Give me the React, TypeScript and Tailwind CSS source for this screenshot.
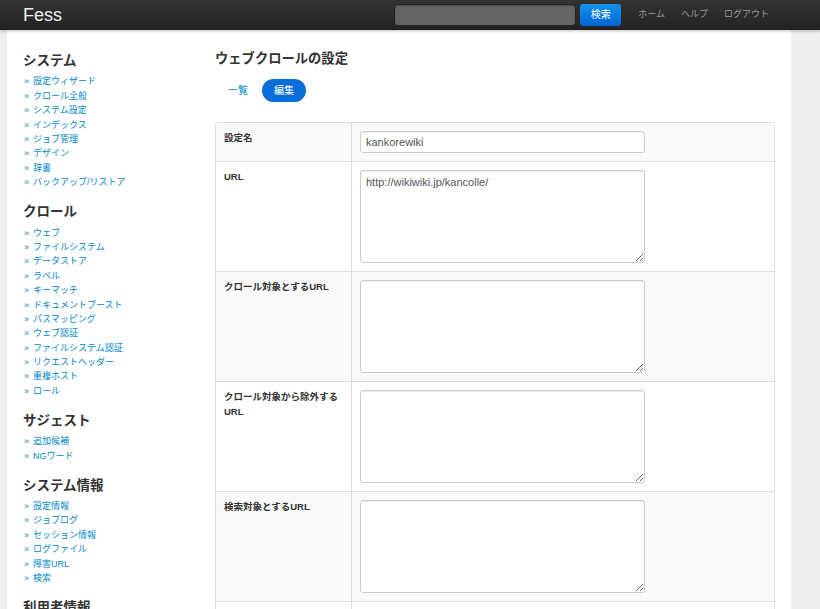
import React from 'react';

const font = { fontFamily: '"Liberation Sans", "Noto Sans CJK JP", sans-serif' };

const sideMenu = [
  {
    title: 'システム',
    links: ['設定ウィザード', 'クロール全般', 'システム設定', 'インデックス', 'ジョブ管理', 'デザイン', '辞書', 'バックアップ/リストア'],
  },
  {
    title: 'クロール',
    links: ['ウェブ', 'ファイルシステム', 'データストア', 'ラベル', 'キーマッチ', 'ドキュメントブースト', 'パスマッピング', 'ウェブ認証', 'ファイルシステム認証', 'リクエストヘッダー', '重複ホスト', 'ロール'],
  },
  { title: 'サジェスト', links: ['追加候補', 'NGワード'] },
  { title: 'システム情報', links: ['設定情報', 'ジョブログ', 'セッション情報', 'ログファイル', '障害URL', '検索'] },
  { title: '利用者情報', links: ['検索ログ', '利用状況'] },
];

const rows = [
  { label: '設定名', kind: 'input', value: 'kankorewiki' },
  { label: 'URL', kind: 'area', value: 'http://wikiwiki.jp/kancolle/' },
  { label: 'クロール対象とするURL', kind: 'area', value: '' },
  { label: 'クロール対象から除外するURL', kind: 'area', value: '' },
  { label: '検索対象とするURL', kind: 'area', value: '' },
  { label: '検索対象から除外するURL', kind: 'area', value: '' },
];

const App: React.FC = () => {
  return (
    <div className="h-[609px] overflow-hidden bg-[#eeeeee]" style={font}>
      <div className="h-[30px] bg-gradient-to-b from-[#333333] to-[#222222] flex items-center shadow-[0_1px_3px_rgba(0,0,0,0.25)] relative z-10">
        <div className="pl-[23px] text-[18px] text-[#eeeeee] leading-none">Fess</div>
        <div className="ml-auto flex items-center">
          <div className="w-[182px] h-[22px] rounded-[4px] bg-[#666666] border border-[#222222] shadow-[inset_0_1px_2px_rgba(0,0,0,0.3)]" />
          <button className="ml-[4px] w-[41px] h-[22px] rounded-[3px] bg-gradient-to-b from-[#1592ea] to-[#0564d0] text-white text-[10px] leading-none">
            検索
          </button>
          <div className="flex items-center ml-[17px] mr-[51px] gap-[16px] text-[9px] text-[#999999]">
            <span>ホーム</span>
            <span>ヘルプ</span>
            <span>ログアウト</span>
          </div>
        </div>
      </div>

      <div className="ml-[7px] w-[784px] bg-white flex px-[16px] pt-[21px] min-h-[579px]">
        <div className="w-[192px] shrink-0">
          {sideMenu.map((sec, i) => (
            <div key={sec.title} className={i === 0 ? '' : 'mt-[12px]'}>
              <h3 className="h-[20px] text-[13.5px] font-bold leading-[20px] text-[#333333] mb-[4px]">{sec.title}</h3>
              <ul>
                {sec.links.map((l) => (
                  <li key={l} className="h-[14.4px] flex items-center text-[9px] text-[#0088cc] whitespace-nowrap">
                    <span className="text-[9px] w-[10px] pl-[1px]">»</span>
                    {l}
                  </li>
                ))}
              </ul>
            </div>
          ))}
        </div>

        <div className="flex-1 min-w-0">
          <h2 className="text-[13.3px] font-bold leading-[20px] text-[#333333] mt-[-2px]">ウェブクロールの設定</h2>
          <div className="flex items-center mt-[10px] text-[10px]">
            <span className="px-[13px] leading-[23px] text-[#0088cc]">一覧</span>
            <span className="ml-[1px] px-[12px] h-[23px] flex items-center rounded-full bg-[#0a6ed8] text-white">編集</span>
          </div>

          <div className="mt-[20px] border border-[#dddddd] rounded-t-[3px]">
            {rows.map((r, i) => (
              <div
                key={r.label}
                className={`flex ${i > 0 ? 'border-t border-[#dddddd]' : ''} ${i % 2 === 0 ? 'bg-[#f9f9f9]' : 'bg-white'}`}
              >
                <div className="w-[136px] shrink-0 border-r border-[#dddddd] px-[8px] pt-[7px] text-[9.5px] font-bold leading-[15px] text-[#333333]">
                  {r.label}
                </div>
                <div className="pl-[8px] pt-[8px] pb-[8px]">
                  {r.kind === 'input' ? (
                    <input
                      readOnly
                      value={r.value}
                      className="block w-[285px] h-[22px] px-[5px] border border-[#cccccc] rounded-[3px] bg-white text-[11px] text-[#555555] shadow-[inset_0_1px_1px_rgba(0,0,0,0.075)] outline-none"
                      style={font}
                    />
                  ) : (
                    <textarea
                      readOnly
                      value={r.value}
                      className="block w-[285px] h-[93px] px-[5px] py-[4px] border border-[#cccccc] rounded-[3px] bg-white text-[11px] leading-[15px] text-[#555555] shadow-[inset_0_1px_1px_rgba(0,0,0,0.075)] outline-none"
                      style={font}
                    />
                  )}
                </div>
              </div>
            ))}
          </div>
        </div>
      </div>
    </div>
  );
};

export default App;
